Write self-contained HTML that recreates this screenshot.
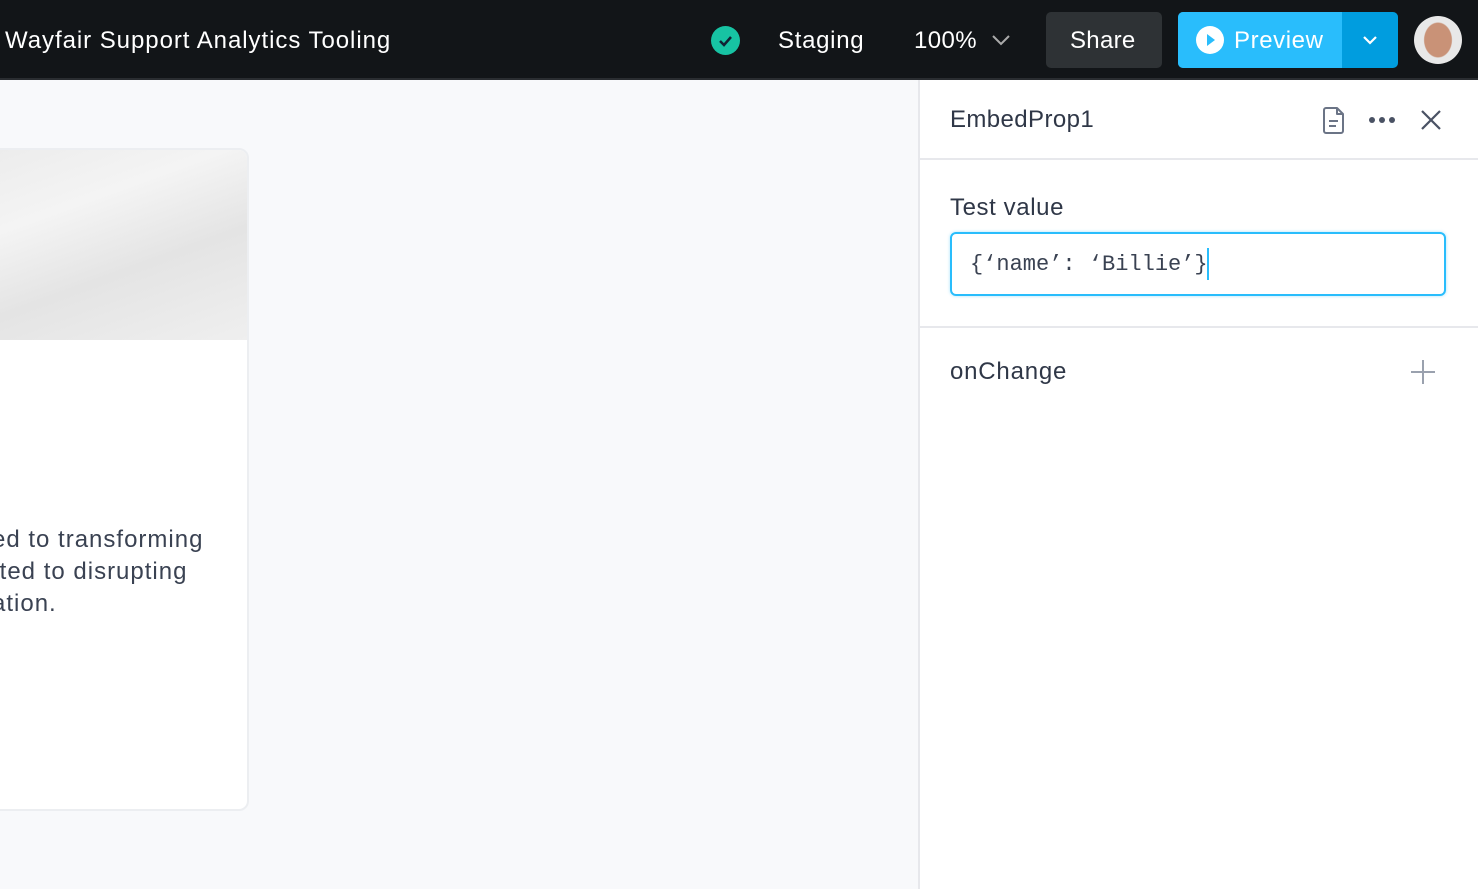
<!DOCTYPE html>
<html><head><meta charset="utf-8"><style>
*{box-sizing:border-box;margin:0;padding:0}
body{width:1478px;height:889px;overflow:hidden;background:#f8f9fb;font-family:"Liberation Sans",sans-serif;position:relative}
.top{position:absolute;left:0;top:0;width:1478px;height:80px;background:#121518;border-bottom:2px solid #2a2d31}
.t{position:absolute;color:#fff;font-size:24px;line-height:30px}
.card{position:absolute;left:-10px;top:148px;width:259px;height:663px;background:#fff;border:2px solid #eceef1;border-radius:10px;overflow:hidden}
.img{position:absolute;left:0;top:0;width:100%;height:190px;background:linear-gradient(160deg,#ececec 0%,#f4f4f4 30%,#e4e4e4 60%,#efefef 100%)}
.ctext{position:absolute;left:0;top:374px;font-size:24px;line-height:32px;color:#3a4252;letter-spacing:1px}
.panel{position:absolute;left:918px;top:80px;width:560px;height:809px;background:#fff;border-left:2px solid #e7e8ec}
.dark{color:#2f3747}
</style></head><body>
<div class="top">
<div class="t" style="left:5px;top:26px;letter-spacing:0.95px">Wayfair Support Analytics Tooling</div>
<div style="position:absolute;left:711px;top:26px;width:29px;height:29px;border-radius:50%;background:#17c3a3"><svg width="29" height="29"><path d="M9 15l4 4 7-8" stroke="#123" stroke-width="2.5" fill="none"/></svg></div>
<div class="t" style="left:778px;top:26px;letter-spacing:0.7px">Staging</div>
<div class="t" style="left:914px;top:26px;letter-spacing:0.4px">100%</div>
<svg style="position:absolute;left:990px;top:32px" width="22" height="16"><path d="M3 4l8 8 8-8" stroke="#aaa" stroke-width="2" fill="none"/></svg>
<div style="position:absolute;left:1046px;top:12px;width:116px;height:56px;background:#2e3235;border-radius:5px"></div>
<div class="t" style="left:1070px;top:26px;letter-spacing:0.3px">Share</div>
<div style="position:absolute;left:1178px;top:12px;width:220px;height:56px;background:#009ddf;border-radius:5px;overflow:hidden"><div style="width:164px;height:56px;background:#29bdfc"></div></div>
<div style="position:absolute;left:1196px;top:26px;width:28px;height:28px;border-radius:50%;background:#fff"><svg width="28" height="28"><path d="M11 8l8 6-8 6z" fill="#29bdfc"/></svg></div>
<div class="t" style="left:1234px;top:26px;letter-spacing:0.6px">Preview</div>
<svg style="position:absolute;left:1360px;top:32px" width="20" height="16"><path d="M4 5l6 6 6-6" stroke="#fff" stroke-width="2.2" fill="none"/></svg>
<div style="position:absolute;left:1414px;top:16px;width:48px;height:48px;border-radius:50%;background:radial-gradient(ellipse 40% 50% at 50% 50%,#c99277 0 70%,#e8e8e8 75%)"></div>
</div>
<div class="card"><div class="img"></div>
<div class="ctext">ed to transforming<br>tted to disrupting<br>ation.</div></div>
<div class="panel">
<div class="dark" style="position:absolute;left:30px;top:26px;font-size:24px;letter-spacing:0.4px">EmbedProp1</div>
<svg style="position:absolute;left:401px;top:25px" width="26" height="30"><path d="M5 3h11l6 6v17a2 2 0 0 1-2 2H5a2 2 0 0 1-2-2V5a2 2 0 0 1 2-2zM16 3v6h6M8 16h9M8 21h7" stroke="#6b7486" stroke-width="2" fill="none" stroke-linejoin="round"/></svg>
<svg style="position:absolute;left:448px;top:33px" width="30" height="14"><circle cx="4" cy="7" r="3" fill="#4a5264"/><circle cx="14" cy="7" r="3" fill="#4a5264"/><circle cx="24" cy="7" r="3" fill="#4a5264"/></svg>
<svg style="position:absolute;left:500px;top:29px" width="22" height="22"><path d="M2 2l18 18M20 2L2 20" stroke="#4a5264" stroke-width="2.2"/></svg>
<div style="position:absolute;left:0;top:78px;width:560px;height:2px;background:#e7e8ec"></div>
<div class="dark" style="position:absolute;left:30px;top:114px;font-size:24px;letter-spacing:0.6px">Test value</div>
<div style="position:absolute;left:30px;top:152px;width:496px;height:64px;border:2px solid #29bdfc;border-radius:6px;box-shadow:0 0 3px rgba(41,189,252,.4)"></div>
<div style="position:absolute;left:50px;top:170px;font-family:'Liberation Mono',monospace;font-size:22px;color:#3a4252;line-height:30px">{‘name’: ‘Billie’}</div>
<div style="position:absolute;left:287px;top:168px;width:2px;height:32px;background:#29bdfc"></div>
<div style="position:absolute;left:0;top:246px;width:560px;height:2px;background:#e7e8ec"></div>
<div class="dark" style="position:absolute;left:30px;top:278px;font-size:24px;letter-spacing:0.8px">onChange</div>
<svg style="position:absolute;left:490px;top:279px" width="26" height="26"><path d="M13 1v24M1 13h24" stroke="#9aa1ae" stroke-width="2"/></svg>
</div>
</body></html>
